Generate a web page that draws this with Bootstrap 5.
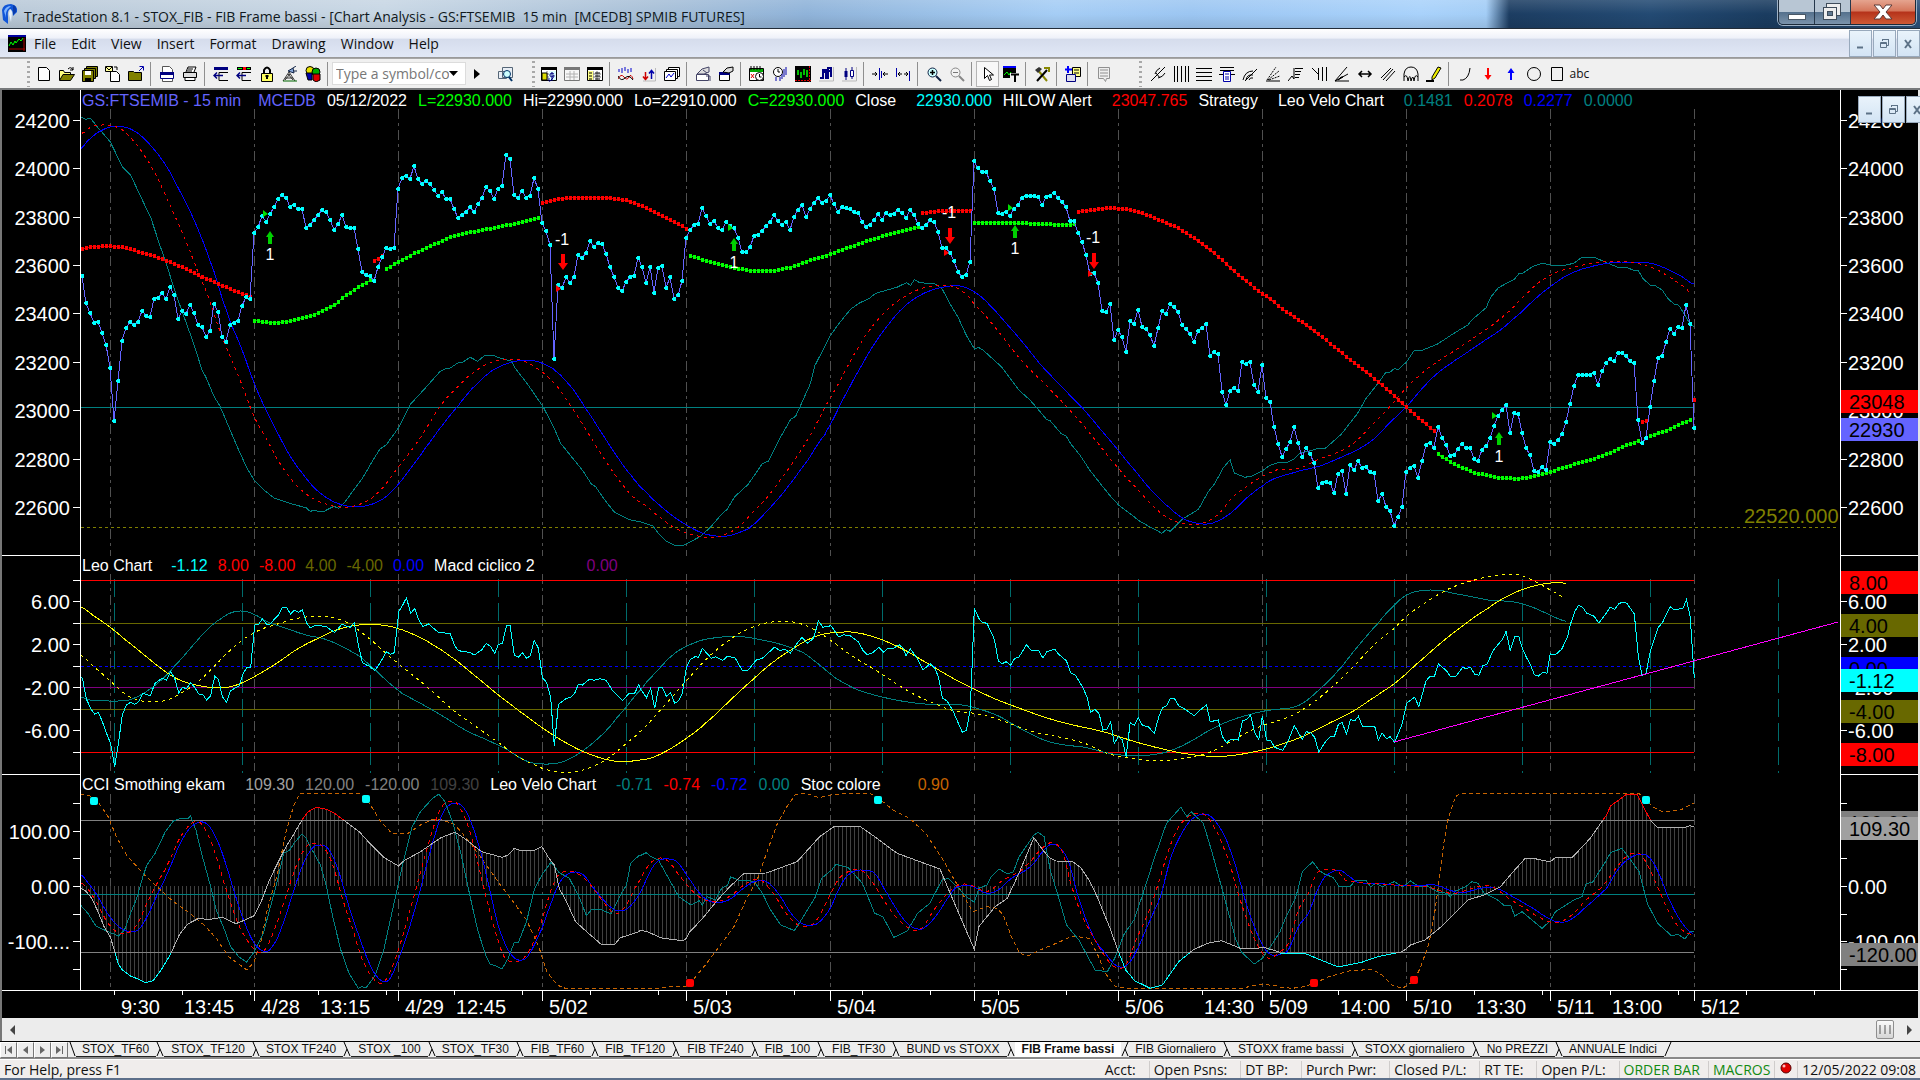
<!DOCTYPE html>
<html lang="en">
<head>
<meta charset="utf-8">
<meta name="viewport" content="width=device-width, initial-scale=1">
<title>TradeStation 8.1 - STOX_FIB</title>
<link href="https://cdn.jsdelivr.net/npm/bootstrap@5.3.0/dist/css/bootstrap.min.css" rel="stylesheet">
<style>
body{font-family:"Open Sans","Noto Sans",sans-serif;font-size:14px;line-height:18px;color:#111;background:#f0f0f0;overflow:hidden}
button{border:0;background:none;padding:0;color:inherit}
svg{display:block}
.titlebar{height:29px;border-bottom:1px solid #222c38;background:linear-gradient(180deg,#ffffff22,#ffffff00 50%,#00000018),linear-gradient(90deg,#b9c9d8 0,#c7d6e4 20%,#a7bfd7 34%,#8fb3d9 42%,#a5cdf5 55%,#9cc6f2 62%,#a9d2fb 74%,#a3cdf6 77.4%,#1c3d62 78.6%,#234a73 86%,#1a3c60 92%,#2c5078 100%)}
.title-text{color:#101820}
.menu-items{gap:15px}
.wbtns{height:25px;border:1px solid #1b2a3a;border-top:0;border-radius:0 0 5px 5px;overflow:hidden;box-shadow:0 0 0 1px #9fb2c6}
.wbtns button{width:36px;background:linear-gradient(#b8c6d4 0 48%,#54708c 50%,#7b93ab);border-right:1px solid #26384c}
.wbtns .wclose{width:64px;background:linear-gradient(#e5a48f 0,#d5765b 46%,#b5321a 50%,#cf5a35);border:0}
.menubar{height:29px;background:linear-gradient(#fff 0,#eef1f9 32%,#d5dcec 34%,#e1e8f6 96%,#9a9a9a 97%)}
.menubar a{color:#111;text-decoration:none}
.mdi button{width:23px;height:27px;border:1px solid #98a9bc;background:linear-gradient(#e9f3fb,#d3e4f4);margin-left:1px}
.toolrow{height:32px;background:#f0f0f0;border-top:1px solid #a7a7a7;border-bottom:2px solid #77797b}
.tb{width:23px;height:26px;display:flex;align-items:center;justify-content:center}
.tb.pressed{background:#f8f8f8;border:1px solid #b5b5b5}
.tb.off{filter:grayscale(1);opacity:.5}
.tb.word{font-size:12px}
.tsep{width:1px;height:24px;background:#8f8f8f;margin:0 4px 0 3px}
.tgrip{width:3px;height:26px;margin:0 2px;background:repeating-linear-gradient(#a8a8a8 0 2px,transparent 2px 5px)}
.tlead{width:25px}
.tgap{width:22px}
.combo{width:134px;height:23px;background:#fff;border:1px solid #dcdcdc}
.combo input{border:0;outline:0;background:none;width:116px;padding:0 0 0 3px;font-size:14px}
.combo input::placeholder{color:#777;opacity:1}
.chart{background:#000;border-left:2px solid #777;border-right:2px solid #e4e4e4;min-height:0}
.pane{min-height:0;position:relative}
.pane1{flex:466 1 0}.pane2{flex:218 1 0}.pane3{flex:216 1 0}
.axl{width:79px;height:100%}.axr{width:78px;height:100%}
.plotbox{min-width:0;height:100%}
.plotbox svg{width:100%;height:100%}
.legend-line{position:absolute;left:1px;top:1px;gap:11px;font:16px/20px "Liberation Sans",Arial,sans-serif;color:#fff;white-space:nowrap}
.pane2 .legend-line{top:0;gap:10px}
.g1{margin-left:6px}.g2{margin-left:9px}.g4{margin-left:42px}.g3{margin-left:26px}
.c-pr{color:#6464ff}.c-gr{color:#00ff00}.c-cy{color:#00ffff}.c-rd{color:#ff0000}.c-tl{color:#008080}.c-bl{color:#0000ff}.c-ol{color:#686800}.c-pu{color:#800080}.c-g1{color:#a0a0a0}.c-g2{color:#808080}.c-dk{color:#404040}.c-or{color:#c86400}.c-ok{color:#128a12}
.chart text{font:20px "Liberation Sans",Arial,sans-serif;fill:#fff}
.chart text.sig{font-size:16px;text-anchor:middle}
.chart text.level{fill:#808000}
.chart text.ink{fill:#000}
.timeaxis{height:28px}
.timeaxis svg{width:100%;height:100%}
.childbtns{position:absolute;right:-11px;top:6px}
.scrollrow{height:23px;background:#ececec;border-left:2px solid #777}
.thumb{width:18px;height:19px;border:1px solid #8e8e8e;border-radius:2px;background:linear-gradient(#fafafa,#d5d5d5)}
.sheets{height:18px;border-top:1px solid #000;border-bottom:2px solid #8a8a8a;background:#ededed;font:12px/15px "Liberation Sans",Arial,sans-serif}
.sheets .nv{width:17px;height:16px;border:1px solid #fff;border-right-color:#777;border-bottom-color:#777;display:flex;align-items:center;justify-content:center}
.slant{flex:none;width:8px}
.sheet{padding:0 7px;height:15px;border-bottom:1px solid #222;white-space:nowrap}
.sheet:nth-of-type(odd){padding-left:6px}
.sheet.on{background:#fff;font-weight:bold;border-bottom-color:#fff}
.status{height:21px;padding-top:1px;background:#f0edec;border-bottom:2px solid #5d6f8a;border-top:1px solid #fff}
.status .cell{border-left:1px solid #cfcccb;padding:0 13px 0 4px;white-space:nowrap}
</style>
</head>
<body class="vh-100 d-flex flex-column">
<header class="titlebar d-flex align-items-start flex-shrink-0">
  <svg width="20" height="28" viewBox="0 0 20 28" aria-hidden="true"><path d="M2 10Q3 4 11 4Q18 5 17 12L13 16Q13 10 10 9Q7 11 8 17L8 24L3 20Z" fill="#1156d8"/><path d="M4 11Q6 6 11 6L9 8Q5 11 6 18Z" fill="#7db4ff"/><path d="M9 14L10 9L12 12L11 22Z" fill="#e8f2ff"/><path d="M13 5Q17 6 16 12L13 15Z" fill="#0a3bab"/></svg>
  <div class="ps-1 pt-1 flex-fill text-truncate title-text"><span class="d-block pt-1">TradeStation 8.1 - STOX_FIB - FIB Frame bassi - [Chart Analysis - GS:FTSEMIB&nbsp; 15 min&nbsp; [MCEDB] SPMIB FUTURES]</span></div>
  <div class="wbtns d-flex me-1">
    <button aria-label="Minimize"><svg width="36" height="24"><rect x="9.500" y="14.500" width="17" height="5" fill="#fff" stroke="#4a5866"/></svg></button>
    <button aria-label="Restore"><svg width="36" height="24" fill="#eee" stroke="#3f4c5a"><rect x="11.500" y="3.500" width="14" height="12"/><rect x="8.500" y="7.500" width="13" height="12"/><rect x="12.500" y="11.500" width="5" height="4" fill="#5f7890"/></svg></button>
    <button class="wclose" aria-label="Close"><svg width="60" height="24"><path d="M23 5h6l3 4 3-4h6l-6 7 6 7h-6l-3-4-3 4h-6l6-7z" fill="#fff" stroke="#5b3a38"/></svg></button>
  </div>
</header>
<nav class="menubar d-flex align-items-center flex-shrink-0">
  <svg class="ms-2" width="18" height="17"><path d="M0 0h18v17h-18z"/><path d="M0 0h18v2h-18z" fill="#0000a0"/><path d="M1 11l2-4 2 3 2-4 1 2 3-4 2 2 2-3" stroke="#0f0" fill="none"/><path d="M1 14h16M16 3v13" stroke="#a00"/></svg>
  <div class="d-flex menu-items ps-2">
    <a href="#">File</a><a href="#">Edit</a><a href="#">View</a><a href="#">Insert</a><a href="#">Format</a><a href="#">Drawing</a><a href="#">Window</a><a href="#">Help</a>
  </div>
  <div class="mdi ms-auto d-flex" id="mdi"></div>
</nav>
<div class="toolrow d-flex align-items-center flex-shrink-0" id="tools"></div>
<main class="chart d-flex flex-column flex-fill">
  <section class="pane pane1 d-flex">
    <svg class="axl" id="l1" viewBox="2 90 79 466" preserveAspectRatio="none"></svg>
    <div class="plotbox flex-fill position-relative"><svg id="p1" viewBox="81 90 1759 466" preserveAspectRatio="none"></svg>
      <div class="legend-line d-flex"><span class="c-pr">GS:FTSEMIB - 15 min</span><span class="c-pr g1">MCEDB</span><span>05/12/2022</span><span class="c-gr">L=22930.000</span><span>Hi=22990.000</span><span>Lo=22910.000</span><span class="c-gr">C=22930.000</span><span>Close</span><span class="c-cy g2">22930.000</span><span>HILOW Alert</span><span class="c-rd g2">23047.765</span><span>Strategy</span><span class="g2">Leo Velo Chart</span><span class="c-tl g2">0.1481</span><span class="c-rd">0.2078</span><span class="c-bl">0.2277</span><span class="c-tl">0.0000</span></div></div>
    <svg class="axr" id="r1" viewBox="1840 90 78 466" preserveAspectRatio="none"></svg>
    <div class="mdi childbtns d-flex" id="mdi2"></div>
  </section>
  <section class="pane pane2 d-flex">
    <svg class="axl" id="l2" viewBox="2 556 79 218" preserveAspectRatio="none"></svg>
    <div class="plotbox flex-fill position-relative"><svg id="p2" viewBox="81 556 1759 218" preserveAspectRatio="none"></svg>
      <div class="legend-line d-flex"><span>Leo Chart</span><span class="c-cy g2">-1.12</span><span class="c-rd">8.00</span><span class="c-rd">-8.00</span><span class="c-ol">4.00</span><span class="c-ol">-4.00</span><span class="c-bl">0.00</span><span>Macd ciclico 2</span><span class="c-pu g4">0.00</span></div></div>
    <svg class="axr" id="r2" viewBox="1840 556 78 218" preserveAspectRatio="none"></svg>
  </section>
  <section class="pane pane3 d-flex">
    <svg class="axl" id="l3" viewBox="2 774 79 216" preserveAspectRatio="none"></svg>
    <div class="plotbox flex-fill position-relative"><svg id="p3" viewBox="81 774 1759 216" preserveAspectRatio="none"></svg>
      <div class="legend-line d-flex"><span>CCI Smothing ekam</span><span class="c-g1 g2">109.30</span><span class="c-g2">120.00</span><span class="c-g2">-120.00</span><span class="c-dk">109.30</span><span>Leo Velo Chart</span><span class="c-tl g2">-0.71</span><span class="c-rd">-0.74</span><span class="c-bl">-0.72</span><span class="c-tl">0.00</span><span>Stoc colore</span><span class="c-or g3">0.90</span></div></div>
    <svg class="axr" id="r3" viewBox="1840 774 78 216" preserveAspectRatio="none"></svg>
  </section>
  <section class="timeaxis flex-shrink-0"><svg id="tx" viewBox="2 990 1916 28" preserveAspectRatio="none"></svg></section>
</main>
<div class="scrollrow d-flex align-items-center flex-shrink-0">
  <button class="px-2" aria-label="Scroll left"><svg width="6" height="10"><path d="M5 0v10L0 5z" fill="#444"/></svg></button>
  <button class="thumb ms-auto" aria-label="Scroll thumb"><svg width="16" height="17"><path d="M3 4v9M8 4v9M13 4v9" stroke="#555"/></svg></button>
  <button class="ms-2 me-2 ps-1" aria-label="Scroll right"><svg width="6" height="10"><path d="M1 0v10L6 5z" fill="#444"/></svg></button>
</div>
<nav class="sheets d-flex flex-shrink-0" id="sheets"></nav>
<footer class="status d-flex flex-shrink-0">
  <span class="ps-1 me-auto">For Help, press F1</span>
  <span class="cell border-0">Acct:</span><span class="cell">Open Psns:</span><span class="cell">DT BP:</span><span class="cell">Purch Pwr:</span><span class="cell">Closed P/L:</span><span class="cell">RT TE:</span><span class="cell">Open P/L:</span>
  <span class="cell pe-2 c-ok">ORDER BAR</span><span class="cell pe-1 c-ok">MACROS</span>
  <span class="cell px-1"><svg width="14" height="16"><circle cx="7" cy="7" r="5" fill="#e00000" stroke="#500"/><circle cx="5" cy="5" r="1.500" fill="#fbb"/></svg></span><span class="cell pe-1">12/05/2022 09:08</span>
</footer>
<script src="https://cdn.jsdelivr.net/npm/bootstrap@5.3.0/dist/js/bootstrap.bundle.min.js"></script>
<script>
const $=id=>document.getElementById(id);
/* child window buttons */
const mdi=`<button aria-label="Minimize child"><svg width="21" height="25"><path d="M7 16.500h6" stroke="#5d7287" stroke-width="2"/></svg></button><button aria-label="Restore child"><svg width="21" height="25" fill="none" stroke="#5d7287"><path d="M8.500 10V8.500h6v6H13M8 8.500h7"/><path d="M6.500 11.500h6v5h-6zM6 12.500h7"/></svg></button><button aria-label="Close child"><svg width="21" height="25"><path d="M7 9l6 8M13 9l-6 8" stroke="#5d7287" stroke-width="2"/></svg></button>`;
$('mdi').innerHTML=mdi;$('mdi2').innerHTML=mdi;

/* toolbar icons on a 16px grid */
const doc='<path d="M2.500 1.500h8l3 3v10h-11z" fill="#fff" stroke="#000"/>';
const mag='<circle cx="6.500" cy="6.500" r="4.500" fill="#cff" stroke="#124"/><path d="M10 10l5 5" stroke="#124" stroke-width="2"/>';
const cal='<path d="M.500 1.500h15v13h-15z" fill="#fff" stroke="#000"/><path d="M0 1h16v3H0z"/><path d="M2 8h12M2 11h12M6 5v9M10 5v9" stroke="#777"/>';
const wins='<path d="M4.500 1.500h11v9h-11z" fill="#fff" stroke="#000"/><path d="M2.500 3.500h11v9h-11z" fill="#fff" stroke="#000"/><path d="M.500 5.500h11v9h-11z" fill="#fff" stroke="#000"/>';
const I={
'New':doc,
'Open':'<path d="M.500 14V4.500h4l1 2h6V8" fill="#ffff80" stroke="#000"/><path d="M.500 14.500L4 8.500h11.500l-4 6z" fill="#808000" stroke="#000"/><path d="M9 3q3-3 5 1M14 1v3h-3" fill="none" stroke="#000"/>',
'Save all':'<path d="M4.500.500h11v10h-11z" fill="#808000" stroke="#000"/><path d="M2.500 2.500h11v10h-11z" fill="#808000" stroke="#000"/><path d="M.500 4.500h11v11h-11z" fill="#808000" stroke="#000"/><path d="M3 5h6v4H3z" fill="#fff"/><path d="M3 12h6v3H3z"/>',
'Import':'<path d="M5.500 5.500h6l3 3v7h-9z" fill="#fff" stroke="#000"/><path d="M.500.500h7v5h-7z" fill="#ff9" stroke="#000"/><path d="M1 1l3 3 3-3M9 1h3v3" fill="none" stroke="#000"/>',
'Close workspace':'<path d="M.500 14.500V5.500h5l1 1h7v8z" fill="#808000" stroke="#000"/><path d="M11 5l4-4M11.500.500h4v4" fill="none" stroke="#00a"/>',
'Window':'<path d="M3.500.500h7l3 3v12h-10z" fill="#fff" stroke="#555"/><path d="M1.500 6.500h13v6h-13z" fill="#fff" stroke="#000080"/><path d="M1 6h14v3H1z" fill="#000080"/>',
'Print':'<path d="M4 6l2-5h8l-2 5" fill="#fff" stroke="#000"/><path d="M1.500 6.500h13v5h-13z" fill="#ddd" stroke="#000"/><path d="M3 11.500h10v3H3z" fill="#fff" stroke="#000"/><path d="M6 3h5M5 5h5" stroke="#000"/>',
'Insert bar':'<path d="M1 1h14v3H1z" fill="#000080"/><path d="M15 6.500H6v8h9" stroke="#000" fill="none"/><path d="M1 9.500h9M4 6.500l-3 3 3 3" fill="none" stroke="#000080" stroke-width="1.500"/>',
'Insert color bar':'<path d="M1 1h14v3H1z"/><path d="M2 2h4v1H2z" fill="#0f0"/><path d="M7 1h3v3H7z" fill="#f00"/><path d="M11 2h3v1h-3z" fill="#0f0"/><path d="M15 6.500H6v8h9" stroke="#000" fill="none"/><path d="M1 9.500h9M4 6.500l-3 3 3 3" fill="none" stroke="#000080" stroke-width="1.500"/>',
'Lock':'<path d="M5 7V4q3-5 6 0v3" fill="none" stroke="#000" stroke-width="2"/><path d="M2.500 7.500h11v8h-11z" fill="#ffff60" stroke="#000"/><path d="M8 9v4M6.500 10h3" stroke="#000" stroke-width="2"/>',
'Satellite':'<path d="M1 15L7 6l6 9M3 12h8M6 8l5 6M8 8l-5 6" fill="none" stroke="#333"/><path d="M6 5l5-3 1 5zM11 2l3-2M12 5l3 0" stroke="#124" fill="#8ad"/><path d="M1 15h14" stroke="#060"/>',
'Cubes':'<circle cx="5" cy="4.500" r="4" fill="#e8e000" stroke="#000"/><circle cx="11" cy="6" r="4" fill="#0a0" stroke="#000"/><path d="M1 7h6v7H3z" fill="#00a" stroke="#000"/><path d="M8 8h7v6l-4 2-3-2z" fill="#d00" stroke="#000"/>',
'Find':'<path d="M5.500 1.500h10v10h-10zM1.500 5.500h8v7h-8z" fill="#e8eef5" stroke="#567"/><circle cx="10" cy="8" r="3.500" fill="#cff" stroke="#036"/><path d="M12 11l3 4" stroke="#036" stroke-width="2"/>',
'Data':cal+'<path d="M1 7h5v7H1z" fill="#dd0" stroke="#000"/><path d="M8 5h7v9H8z" fill="#dff"/><path d="M13 8q-4-2-4 1t3 1-1 3-3-1M11 6v9" fill="none" stroke="#000080"/>',
'Grid':cal,'Table':cal+'<path d="M1 5h5v9H1z" fill="#ff8"/><path d="M2 7h3M2 10h3M2 13h3M8 7h5M8 10h5M8 13h5" stroke="#000"/>',
'Indicator':'<path d="M1 6V3M4 7V2M7 5V1M10 7V3M13 6V2" stroke="#00c"/><path d="M0 13q3-6 6-2t5 0 4 2" fill="none" stroke="#c00"/><path d="M0 10q3 6 7 2t8 2" fill="none" stroke="#000"/>',
'Signal':'<path d="M4.500 6v7M2 10.500l2.500 3 2.500-3" fill="none" stroke="#c00" stroke-width="1.500"/><path d="M10.500 13V5M8 7.500l2.500-3 2.500 3" fill="none" stroke="#00a" stroke-width="1.500"/><path d="M14.500 2v13H2" fill="none" stroke="#bbb"/>',
'Layers':wins+'<path d="M2 12l3-4 2 3 3-4" fill="none" stroke="#00c"/>',
'Format window':'<path d="M1.500 8.500h12v6h-12z" fill="#fff" stroke="#446"/><path d="M2 8l5-5 7-2v5l-5 2z" fill="#ddd" stroke="#446"/><path d="M8 4l4 3M11 10h4v5" stroke="#446" fill="none"/>',
'Format symbol':'<path d="M1.500 6.500h10v8h-10z" fill="#fff" stroke="#000"/><path d="M1 6h11v3H1z" fill="#000080"/><path d="M5 6l4-4 6-1v4l-4 2z" fill="#ddd" stroke="#000"/>',
'Schedule':'<path d="M.500 2.500h14v12h-14z" fill="#fff" stroke="#000"/><path d="M1 3h13v3H1z" fill="#0a0"/><path d="M2 0v4M5 0v4M8 0v4M11 0v4" stroke="#000"/><circle cx="10.500" cy="10.500" r="4" fill="#fff" stroke="#000"/><path d="M10.500 8v3h2" fill="none" stroke="#000"/><path d="M2 8l3 4M5 8l-3 4" stroke="#d00"/>',
'Interval':'<circle cx="6" cy="6" r="4.500" fill="#fff" stroke="#000"/><path d="M6 3v3h2" fill="none" stroke="#000"/><path d="M12 3v8M14 1v8M4 11v4M8 11v4M10 8v5" stroke="#00a"/>',
'Black chart':'<path d="M0 0h16v16H0z"/><path d="M3 4v5M6 6v6M9 3v6M12 4v7" stroke="#0f0" stroke-width="1.500"/><path d="M0 14.500h16M14.500 0v16" stroke="#d00" stroke-dasharray="2 1"/>',
'Bars':'<path d="M2 12h3V4h3v8h2V2h3v9M5 6h3M10 5h3" fill="none" stroke="#000080" stroke-width="2"/><path d="M15.500 1v14H1" fill="none" stroke="#bbb"/>',
'Candles':'<path d="M5 2v12M11 1v12" stroke="#000080"/><path d="M3.500 5h3v6h-3z" fill="#000080"/><path d="M9.500 4.500h3v6h-3z" fill="#fff" stroke="#000080"/><path d="M15.500 1v14H1" fill="none" stroke="#bbb"/>',
'Narrow':'<path d="M7.500 2v12M9.500 5v7" stroke="#00a"/><path d="M0 8h5M3 6l2 2-2 2M16 8h-5M13 6l-2 2 2 2" fill="none" stroke="#000"/>',
'Widen':'<path d="M1.500 2v9M14.500 5v10" stroke="#00a"/><path d="M3 8h4M5 6L3 8l2 2M13 8H9M11 6l2 2-2 2" fill="none" stroke="#000"/>',
'Zoom in':mag+'<path d="M4 6.500h5M6.500 4v5" stroke="#000" stroke-width="1.500"/>','Zoom out':mag+'<path d="M4 6.500h5" stroke="#000"/>',
'Pointer':'<path d="M4.500 1.500v11l3-3 2 5 2-1-2-4.500h4z" fill="#fff" stroke="#000"/>',
'Chart tip':'<path d="M0 1h13v11H0z"/><path d="M0 0h13v2H0z" fill="#00f"/><path d="M1 9l3-3 2 3 2-3" fill="none" stroke="#0f0"/><path d="M7 7h9v9H7z" fill="#f0f0f0"/><path d="M8 8.500h8M12 8v8" stroke="#000" stroke-width="2"/>',
'Tools':'<path d="M3 3l10 12" stroke="#880" stroke-width="2"/><path d="M13 4L3 15" stroke="#000" stroke-width="2"/><path d="M1 4l4-3 3 2-4 4z" fill="#333"/><path d="M10 2l5 0 0 4" fill="none" stroke="#880" stroke-width="2"/>',
'Add window':'<path d="M3 0v7M0 3.500h7" stroke="#00f" stroke-width="2"/><path d="M7.500 1.500h8v9h-8z" fill="#ff8" stroke="#000"/><path d="M9 4h5M9 7h5" stroke="#000"/><path d="M1.500 8.500h9v7h-9z" fill="#dde" stroke="#000080"/>',
'Comment':'<path d="M2.500 1.500h11v11h-3l-1 3-2-3h-5z" fill="#eee" stroke="#333"/><path d="M4 4h8M4 7h8M4 10h8" stroke="#333"/>',
'Fork':'<path d="M1 15L9 7M5 8q1-4 5-6M8 12q5-1 7-5M9 7l6-6M6 7l4 5" fill="none" stroke="#000"/>',
'Vertical lines':'<path d="M1.500 0v16M4.500 0v16M8.500 0v16M12.500 0v16M15.500 0v16" stroke="#000"/>',
'Horizontal lines':'<path d="M0 2.500h16M0 6.500h16M0 10.500h16M0 14.500h16" stroke="#000"/>',
'Price levels':'<path d="M1 1.500h14M1 4.500h14M0 8.500h16" stroke="#000"/><path d="M4.500 5.500h7v10h-7z" fill="#fff" stroke="#00a"/><path d="M6 8h4M6 11h4M6 13h4" stroke="#00a"/>',
'Arcs':'<path d="M1 14Q3 5 11 5M4 14q1-6 7-5M7 14q1-3 4-2M3 15L15 3" fill="none" stroke="#000"/>',
'Fan':'<path d="M1 15h14" stroke="#000"/><path d="M2 14L11 1M3 14L14 5M4 14l11-4" stroke="#000" stroke-dasharray="2 1"/>',
'Retrace':'<path d="M0 15l4-5 2 3V2M7 2.500h8M7 5.500h6M7 8.500h5M7 11.500h4" fill="none" stroke="#000"/>',
'Time levels':'<path d="M1 2l6 6M7.500 2v12M11.500 1v14M15.500 1v14" stroke="#000"/>',
'Speed lines':'<path d="M1 15h14M1 15L13 1M1 15l13-7" fill="none" stroke="#000"/><path d="M4 14l5-3h-2z" stroke="#000"/>',
'Extend':'<path d="M2 8h12M5 5L2 8l3 3M11 5l3 3-3 3" fill="none" stroke="#000" stroke-width="1.500"/>',
'Channel':'<path d="M1 12L11 2M3 14L13 3M6 15l9-10" stroke="#000"/>',
'Cycles':'<path d="M1 15V8q1-7 7-7t7 7v7M1 11q3-4 4 4 2-9 3 0 2-8 3 0 1-8 4-4" fill="none" stroke="#000"/>',
'Pencil':'<path d="M6 11L12 1l3 1-6 10-3 2z" fill="#ee0" stroke="#000"/><path d="M0 15h8" stroke="#000" stroke-width="2"/>',
'Arc':'<path d="M3 14h3q6-2 7-12" fill="none" stroke="#000"/>',
'Down arrow':'<path d="M7 2h2v7h2.500L8 14 4.500 9H7z" fill="#f00"/>','Up arrow':'<path d="M7 14h2V7h2.500L8 2 4.500 7H7z" fill="#00f"/>',
'Ellipse':'<circle cx="8" cy="8" r="6.500" fill="none" stroke="#000"/>','Rectangle':'<path d="M2.500 1.500h11v13h-11z" fill="none" stroke="#000"/>'};
const order=['<span class="tlead"></span><i class="tgrip"></i>','New','Open','Save all','Import','Close workspace','|','Window','Print','|','Insert bar','Insert color bar','Lock','Satellite','Cubes','|',
'<div class="combo d-flex align-items-center"><input type="text" aria-label="Symbol" placeholder="Type a symbol/co"><button aria-label="Symbol list"><svg width="10" height="6"><path d="M0 0h9L4.500 5z"/></svg></button></div><button class="px-1 ms-1 me-2" aria-label="Go"><svg width="7" height="10"><path d="M0 0v10l6-5z"/></svg></button>','Find','<i class="tgrip ms-3"></i>',
'Data','!Grid','Table','|','Indicator','Signal','Layers','|','Format window','Format symbol','|','Schedule','Interval','Black chart','Bars','Candles','|','Narrow','Widen','|','Zoom in','!Zoom out','|','*Pointer','Chart tip','|','Tools','|','Add window','|','!Comment',
'<span class="tgap"></span><i class="tgrip me-1"></i>','Fork','Vertical lines','Horizontal lines','Price levels','Arcs','Fan','Retrace','Time levels','Speed lines','Extend','Channel','Cycles','Pencil','|','Arc','Down arrow','Up arrow','Ellipse','Rectangle','<button class="tb word">abc</button>'];
$('tools').innerHTML=order.map(n=>{
 if(n[0]==='<')return n;if(n==='|')return '<i class="tsep"></i>';
 const c=n[0]==='!'?' off':n[0]==='*'?' pressed':'';n=n.replace(/^[!*]/,'');
 return `<button class="tb${c}" aria-label="${n}"><svg width="16" height="16">${I[n]}</svg></button>`}).join('');

/* workbook tabs */
const names=['STOX_TF60','STOX_TF120','STOX TF240','STOX _100','STOX_TF30','FIB_TF60','FIB_TF120','FIB TF240','FIB_100','FIB_TF30','BUND vs STOXX','FIB Frame bassi','FIB Giornaliero','STOXX frame bassi','STOXX giornaliero','No PREZZI','ANNUALE Indici'];
const slant=d=>`<svg class="slant" height="15"><path d="${d}" fill="none" stroke="#000"/></svg>`;
$('sheets').innerHTML=['M8 1v8L3 5zM1 1h1v8H1z','M7 1v8L2 5z','M2 1v8l5-4z','M1 1v8l5-4zM7 1h1v8H7z'].map((d,i)=>`<button class="nv" aria-label="Tab scroll ${i+1}"><svg width="9" height="10"><path d="${d}" fill="#666"/></svg></button>`).join('')+
 slant('M2 0L7 14')+names.map((t,i)=>`<button class="sheet${i===11?' on':''}">${t}</button>`+slant(i===16?'M7 0L1 14':i===11?'M7 0L1 14M4 7L7 14':'M1 0L7 14M4 7L1 14')).join('');

/* curve tiles: origin x, origin y, horizontal units per pixel; three vertical units per pixel */
const T={a:[0,0,2.45],b:[500,0,2.45],c:[1100,0,1.912],d:[0,300,2.3758],e:[640,240,2.3758],f:[1280,240,2.45],g:[0,550,2.45],h:[640,550,2.45],i:[1280,550,2.45],j:[0,770,2.45],k:[640,770,2.45],l:[1280,770,2.45]};
const pts=s=>s.split(';').flatMap(q=>{q=q.trim();const [x0,y0,k]=T[q[0]];return q.slice(1).trim().split(/\s+/).map(p=>{const [x,y]=p.split(',').map(Number);return [x0+x/k,y0+y/3]})}).sort((m,n)=>m[0]-n[0]);
const r=n=>Math.round(n*10)/10;
const line=(p,c,x='')=>`<polyline points="${p.map(q=>r(q[0])+','+r(q[1])).join(' ')}" fill="none" stroke="${c}" ${x}/>`;
const smooth=p=>{const o=[];for(let i=0;i<p.length-1;i++){const a=p[i-1]||p[i],b=p[i],c=p[i+1],d=p[i+2]||c;for(let j=0;j<4;j++){const t=j/4,f=k=>.5*(2*b[k]+(c[k]-a[k])*t+(2*a[k]-5*b[k]+4*c[k]-d[k])*t*t+(3*b[k]-a[k]-3*c[k]+d[k])*t*t*t);o.push([b[0]+(c[0]-b[0])*t,f(1)])}}o.push(p[p.length-1]);return o};
const at=(p,x)=>{for(let i=1;i<p.length;i++)if(p[i][0]>=x){const a=p[i-1],b=p[i];return b[0]===a[0]?b[1]:a[1]+(b[1]-a[1])*(x-a[0])/(b[0]-a[0])}return p[p.length-1][1]};
const H=(y,c,x2=1694,x='')=>`<path d="M81 ${y}H${x2}" stroke="${c}" ${x}/>`;
const days=(y1,y2)=>[...Array(12)].map((_,i)=>`<path d="M${110.5+144*i} ${y1}V${y2}" stroke="#505050" stroke-dasharray="10 4 3 4"/>`).join('');
const D='stroke-dasharray="3 4"';

/* price, one close per 4px bar */
const price=[[82,0,[829]],[86,300,[10,39,68,66,98,134,203,362,242,122,83,66,74,66,32,47,50]],[154,0,[897,893,879,897,860,885]],[178,300,[56,33,41,14,38,74,81,110,92,11,35,110,125,74,68,62,17]],
[246,0,[892,897,699,682,648,665,642,621,597,584,593,621,614,626,627,684,674,661,645,630,635,659,689,672,645,681,684,684,748,816,826,829,843,801,772,744,747,745,566,534,527,536,499,537,552,542,551,569,587,576,597,597,627,654,645,635,621,635,611,593,560,574,597,566,557,464,477,586,593,572,593,588,534,567,670,693,735,1076,855,863,832,850,831,765,773,759,723,741,730,731,762,801,831,863,874,846,832,828,773,801,850,800,878,804,798,863,832,896,886,843,713,690,675,673,624,648,672,663,684,690,665,679,684,713,757,757,742,707,705,693,678,666,645,663,674,665,689,650,629,616,650,626,608,595,609,603,586,611,635,621,623,626,635,638,665,680,674,659,642,659,638,645,641,629,638,653,629,645,672,684,675,660,665,695,743,743,759,783,816,831,825,786,483,505,515,516,543,567,638,642,635,647,627,614,593,587,587,587,591,614,591,587,578,593,605,621,663,664,698,726,765,823,819,849]],
[1102,240,[213,215,191,299,269,291,336,243,252,209,260,267,285,318,264,213,221,191,201,215,255,267,282,306,272,264,252,348,336,342,455,495,452,444,454,366,371,366,435,455,375,474,486,561,611,650,627,606,561,608,651,623,642,668,743,728,726,728,759,701,692,761,675,690,663,684,681,695,699,783,762,800,812,857,830,800,695,684,678,713,662,615,608,623,560,593,614,648,645,626,611,623,624,656,663,629,617,593,557,528,510,495,578,518,521,578,624,645,692,695,681,690,605,611,600,581,545,491,437,405,405,405,405,399,435,392,369,357,363,338,339,348,363,369,539,608,594,501,423,353,348,306,266,281,261,264,194,252,564]]].flatMap(([x,o,v])=>v.map((y,i)=>[x+4*i,o+y/3]));

const vT=pts('a 197,350 210,358 222,355 240,383 270,425 300,500 320,525 345,590 370,655 390,730 410,800 425,860 436,900;d 440,60 460,130 480,210 490,233 508,288 522,317 535,355 550,400 567,450 585,500 604,541 630,573 652,595 700,614 727,623 737,634 747,631 757,634 770,634 793,619 805,625 822,602 840,570 862,533 885,483 902,448 918,434 947,383 975,313 1010,265 1045,215 1060,205 1070,204 1090,187 1100,186 1117,172 1135,184 1152,166 1175,168 1190,175 1205,180 1213,180 1225,206 1255,255 1290,320 1313,375 1332,430 1385,513 1405,552 1415,560 1435,597 1460,637 1495,659 1520,665;e 0,845 30,857 45,882 62,903 82,916 104,916 125,902 145,888 170,858 190,828 207,808 225,770 257,733 290,672 305,663 330,600 358,538 370,529 382,495 405,430 415,378 452,287 470,255 500,208 520,190 545,175 560,160 585,151 610,142 633,128 643,136 652,119 665,128 700,131 718,147 735,188 755,230 775,285 795,328 804,322 815,330 860,382 900,450 925,478 945,507 965,537 975,543 1000,580 1012,588 1025,614 1045,645 1070,693 1095,733 1120,772 1137,795 1190,846 1240,880 1250,869 1260,874 1290,836 1327,808 1350,755 1365,732 1385,685 1402,659 1412,699 1437,712 1455,708 1478,693 1495,677 1515,668;f 0,667 15,668 35,657 50,638 70,634 95,624 112,624 150,583 190,520 210,477 240,430 260,396 270,396 280,386 290,388 310,366 328,333 350,330 385,313 430,277 460,255 470,240 505,203 516,172 535,143 575,117 585,101 595,99 620,79 642,70 665,75 700,75 720,70 738,53 770,52 800,68 830,83 850,83 870,92 878,92 890,117 908,136 918,136 937,151 950,175 965,192 977,196 990,222 1003,248 1013,260');
const vR=smooth(pts('a 201,400 225,380 250,375 275,377 300,390 325,420 350,460 380,520 410,598 440,678 465,752 490,830 510,890;d 520,85 545,165 575,255 604,350 630,410 660,480 690,535 720,575 750,600 785,616 820,622 850,615 880,597 915,555 947,500 980,447 1010,390 1050,312 1080,270 1110,232 1150,197 1180,182 1215,178 1245,184 1285,213 1320,254 1360,325 1400,405 1440,485 1480,555 1510,597;e 5,790 40,825 80,862 110,878 140,889 175,892 205,882 235,860 265,820 300,775 330,725 370,655 410,575 440,500 470,435 500,362 535,288 575,225 610,185 650,155 690,139 735,137 765,153 795,194 850,272 905,360 960,430 1015,502 1070,582 1137,685 1180,745 1225,805 1260,838 1300,853 1335,850 1370,827 1410,770 1440,740 1475,712 1510,692;f 0,688 45,686 90,660 150,633 190,600 230,550 262,510 290,470 320,430 360,387 400,353 450,313 510,265 560,215 610,155 640,122 680,95 720,82 770,68 830,65 875,70 920,87 960,115 990,140 1010,162'));
const vB=smooth(pts('a 197,447 215,422 240,397 270,381 290,379 320,387 350,412 380,452 410,503 440,572 470,645 500,732 525,817 545,897;d 550,75 575,150 604,250 630,325 660,400 690,470 720,523 750,568 785,600 820,617 855,620 885,612 915,592 947,552 980,498 1010,445 1050,377 1090,315 1120,268 1160,221 1190,198 1220,185 1255,180 1280,186 1300,197 1320,213 1360,265 1390,323 1430,400 1470,476 1500,527;e 0,740 35,783 75,825 110,855 150,880 190,889 215,886 245,873 265,858 310,802 350,742 400,658 440,583 452,552 480,483 510,412 550,325 590,254 625,203 660,170 690,152 725,140 760,138 795,156 830,194 870,250 910,308 950,372 1000,438 1050,502 1090,562 1137,632 1180,698 1220,758 1260,805 1290,835 1320,849 1355,851 1385,835 1410,812 1440,775 1480,737 1505,717;f 10,706 50,692 100,677 150,652 190,629 230,597 270,547 310,500 350,443 390,395 430,360 490,311 540,270 590,218 630,172 662,140 700,108 740,87 800,70 850,66 910,70 950,88 985,110 1013,132'));
const trail=(s,c)=>{const p=pts(s);let o='';for(let x=82+4*Math.ceil((p[0][0]-1.5-82)/4);x<=p[p.length-1][0]+1.5;x+=4)o+=`<path d="M${x-1} ${Math.round(at(p,x))-2}h3v4h-3z" fill="${c}"/>`;return line(p,c,'stroke-opacity=".8"')+o};
const trails=[['a 201,747 225,741 260,738 295,741 330,752 380,770 430,793 480,822 530,850 580,876 613,891','#f00'],['a 917,783 937,768','#f00'],['d 604,62 640,68 660,69 700,60 740,47 770,30 800,12;a 835,897 870,867 908,840','#0f0'],['a 946,806 976,786 1015,760 1060,735 1100,713 1150,697 1200,686 1260,671 1321,653','#0f0'],['b 103,609 140,598 180,593 260,593 310,601 350,619 400,650 430,669 458,687','#f00'],['b 466,767 500,781 540,794 575,804 610,812 670,812 710,803 760,780 809,763 850,744 900,723 950,704 1000,688 1030,681','#0f0'],['b 1034,640 1070,634 1152,632','#f00'],['b 1162,668 1250,668 1300,671 1380,675 1409,673','#0f0'],['b 1417,635 1460,629 1470,627;c 5,626 25,624 60,630 95,648 125,668 150,685 180,715 210,750 240,790 270,832 300,870 325,897;e 1370,46 1420,104 1478,161;f 5,207 60,252 115,303 170,358 220,405 250,436 280,468 310,503 350,545 378,573','#f00'],['f 388,644 430,675 475,698 530,713 580,716 610,712 662,696 700,680 760,660 810,637 850,615 878,603','#0f0'],['f 907,588 940,575 1005,539','#0f0'],['f 887,545 897,543','#f00'],['f 1013,480 1015,480','#f00']];
const buy=(x,y,ty,tx,t)=>`<path d="M${x} ${y}l4 6h-2v7h-4v-7h-2z" fill="#00d000"/><text class="sig" x="${x}" y="${ty+6}">1</text><path d="M${tx-3} ${t-3}v7l5-3z" fill="#00e000"/>`;
const sell=(x,y,ty,tx,t)=>`<path d="M${x} ${y+16}l5-7h-3v-9h-4v9h-3z" fill="#f00"/><text class="sig" x="${x-1}" y="${ty+6}">-1</text><path d="M${tx-2} ${t-3}v7l5-3z" fill="#f00"/>`;
$('p1').innerHTML='<g shape-rendering="crispEdges">'+days(109,556)+H(407.5,'#008080')+H(527.5,'#808000',1838,'stroke-dasharray="3 3"')+line(vT,'#008080')+line(vB,'#0000ff')+line(vR,'#ff0000',D)+trails.map(t=>trail(...t)).join('')+line(price,'#6464ff')+price.map(([x,y])=>`<path d="M${x-1} ${Math.round(y)-2}h3v4h-3zM${x-2} ${Math.round(y)-1}h1v2h-1z" fill="#0ff"/>`).join('')+'</g>'+
buy(270,231,254,266,213)+buy(734,238,262,731,227)+buy(1015,225,248,1011,207)+buy(1499,432,456,1495,415)+sell(563,254,239,558,288)+sell(950,228,212,946,252)+sell(1094,253,237,1090,273)+'<text class="level" x="1744" y="523">22520.000</text>';

const osc=pts('g 197,379 202,385 212,448 222,475 232,493 241,487 251,515 261,550 271,580 281,650 290,580 300,493 310,465 320,457 330,463 340,455 350,430 368,437 380,400 397,385 408,390 418,365 428,385 438,430 447,412 457,416 467,398 477,412 487,432 497,434 506,450 516,438 526,379 535,388 545,440 555,457 565,422 575,415 585,409 595,372 605,352 614,354 624,225 634,222 643,207 653,222 662,222 672,208 682,195 692,172 702,172 712,193 721,180 731,187 741,180 751,218 760,233 775,225 800,230 820,248 838,222 848,228 858,232 868,218 878,285 888,338 898,345 907,350 918,362 928,345 947,305 956,313 966,308 977,185 987,164 996,143 1006,190 1016,176 1026,210 1036,230 1050,222 1075,248 1103,250 1113,285 1123,302 1150,307 1162,315 1180,300 1191,281 1201,288 1212,310 1221,283 1231,280 1241,227 1250,227 1260,315 1270,322 1280,308 1290,325 1299,318 1309,271 1319,295 1329,383 1339,397 1349,440 1358,588 1368,463 1388,445 1398,443 1408,430 1417,402 1427,405 1445,387 1455,391 1470,386 1485,391 1500,420 1525,452 1540,432 1555,430 1565,403;h 0,415 16,443 26,415 36,475 46,412 55,412 65,440 75,428 85,460 95,452 104,430 114,350 124,328 135,320 143,322 153,295 175,325 185,320 203,331 213,320 232,322 250,360 265,360 285,330 300,325 330,291 343,302 355,298 369,309 380,288 397,262 410,280 425,265 437,213 448,232 468,227 477,243 487,261 498,254 515,257 535,276 547,303 557,314 570,308 585,292 597,307 607,295 622,294 635,284 644,294 652,317 662,296 680,327 693,360 711,341 722,355 731,380 741,445 752,452 765,478 790,547 800,540 809,480 814,340 819,175 830,205 838,217 850,220 860,245 868,268 878,333 887,341 897,335 908,346 918,325 928,322 947,284 957,300 977,302 987,324 997,305 1016,297 1025,312 1045,333 1055,368 1067,376 1085,413 1095,440 1104,487 1115,478 1125,492 1134,540 1144,538 1153,515 1162,580 1172,560 1182,570 1191,620 1201,518 1211,526 1221,503 1231,526 1245,530 1260,550 1271,500 1280,473 1290,467 1300,445 1310,447 1320,467 1335,478 1358,497 1370,482 1388,465 1397,515 1417,510 1427,560 1437,578 1448,567 1466,570 1476,513 1487,507 1496,495 1506,548 1516,568 1525,498 1535,570 1545,572 1555,592;i 0,598 7,601 20,572 35,527 45,548 55,568 64,545 75,548 85,562 95,607 113,572 125,558 133,560 143,523 152,517 163,552 173,508 183,513 192,499 202,528 215,530 232,529 241,571 250,548 261,566 270,560 281,577 300,520 310,460 330,441 340,470 358,392 368,379 378,380 388,342 408,362 418,380 430,380 447,353 457,355 467,352 477,373 487,376 497,347 507,343 523,300 545,268 554,244 564,302 575,260 585,260 595,300 605,325 614,345 623,374 633,378 644,367 654,370 662,311 674,315 690,298 704,263 711,225 722,185 732,165 742,173 752,190 770,199 781,219 800,188 809,172 820,178 830,161 840,156 850,160 868,192 878,320 887,376 897,370 907,305 927,232 937,218 956,170 966,180 987,175 996,149 1005,200 1015,384');
const y1=smooth(pts('g 197,170 230,198 270,232 310,272 350,312 400,360 440,390 480,405 525,413 560,411 590,400 630,375 680,338 730,296 780,265 820,242 860,228 907,223 940,226 976,236 1020,257 1060,284 1110,325 1160,374 1221,435 1280,490 1340,543 1400,587 1450,615 1500,632 1535,635;h 0,630 15,628 60,606 114,565 160,520 220,452 280,385 330,333 370,300 410,270 450,252 500,246 535,249 590,268 640,295 690,330 760,380 819,417 870,447 930,475 1000,505 1060,525 1140,547 1221,578 1300,602 1360,615 1410,619 1460,615 1525,600;i 0,584 60,557 120,520 180,483 240,435 281,400 330,347 390,283 450,225 510,175 550,143 595,118 640,103 680,98 702,100'));
const y2=smooth(pts('g 197,315 230,350 270,393 310,435 345,452 375,455 410,450 445,428 480,400 520,355 560,305 600,265 640,238 680,222 720,207 760,200 800,200 830,208 860,225 907,268 950,315 1000,365 1050,415 1110,480 1160,525 1221,577 1270,620 1310,645 1345,661 1385,667 1420,663 1460,645 1495,620 1535,580;h 0,545 50,480 100,410 160,330 220,270 260,240 300,222 330,215 380,217 420,235 466,270 520,318 570,355 620,395 670,432 720,460 770,483 819,490 870,505 920,527 970,548 1030,562 1090,580 1140,608 1180,621 1240,631 1300,631 1350,621 1400,605 1450,573 1500,540 1530,525;i 0,510 40,490 90,450 130,408 180,350 230,285 280,235 320,188 370,147 420,113 470,92 530,76 570,73 595,78 640,104 670,125 700,145'));
const t2=smooth(pts('g 197,442 225,451 310,452 340,438 370,415 400,385 430,345 470,290 510,237 540,207 565,189 590,183 620,192 660,218 700,235 750,255 790,265 830,285 880,318 918,358 950,395 985,430 1030,460 1080,495 1140,540 1190,568 1240,597 1280,627 1310,640 1355,641 1390,630 1430,600 1470,560 1510,505;h 5,415 40,365 80,315 114,289 150,271 200,261 250,260 300,270 350,285 400,308 440,345 480,385 530,418 590,440 650,455 710,463 790,465 830,477 880,499 930,535 990,570 1040,585 1090,592 1150,610 1190,616 1240,616 1290,606 1340,580 1400,538 1450,510 1500,492 1530,483;i 0,477 20,475 55,460 100,415 140,365 190,290 240,220 281,165 310,135 345,122 390,121 430,131 470,140 510,150 560,154 595,162 640,183 700,214'));
$('p2').innerHTML='<g shape-rendering="crispEdges">'+days(574,771)+[...Array(14)].map((_,i)=>`<path d="M${114.5+128*i} 579V773" stroke="#006c6c" stroke-dasharray="18 6"/>`).join('')+H(580.5,'#f00')+H(623.5,'#686800')+H(666.5,'#00f',1694,'stroke-dasharray="3 3"')+H(687.5,'#800080')+H(709.5,'#686800')+H(752.5,'#f00')+line(t2,'#008080')+line(y1,'#ffff00')+line(y2,'#ffff00',D)+line(osc,'#00ffff')+'<path d="M1394 742L1838 622" stroke="#f0f"/></g>';

const cci=pts('j 197,355 210,363 225,385 240,425 255,470 270,500 280,540 290,583 300,600 320,618 340,628 355,638 375,632 395,600 417,555 440,493 460,462 485,446 515,448 545,442 578,461 600,450 623,437 640,395 660,330 680,280 700,232 720,192 740,150 755,125 775,112 800,118 820,130 845,153 880,185 910,225 940,262 976,288 990,272 1030,245 1080,203 1115,187 1140,207 1180,245 1230,262 1245,255 1260,235 1280,243 1310,240 1328,230 1345,265 1358,285 1370,355 1390,400 1410,455 1440,488 1475,525 1505,524 1520,503 1565,485;k 0,480 20,486 50,503 75,508 105,512 114,505 122,485 150,450 190,390 220,350 255,310 310,309 385,275 440,200 475,170 540,170 575,200 630,250 690,277 735,297 760,370 790,455 819,538 830,470 870,410 900,385 930,305 965,203 990,245 1005,265 1020,273 1060,275 1080,293 1100,330 1120,380 1150,470 1172,545 1190,600 1212,632 1250,655 1280,645 1320,575 1355,540 1390,520 1425,512 1475,537 1530,533 1565,545;l 0,550 60,550 100,570 143,591 200,577 240,560 300,545 320,525 355,510 400,465 460,390 500,375 540,350 575,300 600,266 625,266 662,276 675,262 715,264 760,205 800,135 810,108 850,72 875,73 890,110 910,155 925,173 990,173 1005,167 1013,170');
const b3=smooth(pts('j 197,313 220,345 240,380 262,428 290,470 320,485 340,478 360,440 385,375 410,310 440,225 465,175 490,156 510,165 530,205 550,270 575,370 600,460 623,520 650,545 670,525 690,472 715,380 740,290 765,235 785,226 805,238 830,305 855,410 880,500 905,580 925,622 945,635 960,615 985,540 1005,465 1025,380 1045,285 1070,178 1090,118 1115,99 1135,112 1155,160 1180,255 1200,360 1220,465 1245,540 1270,570 1295,555 1328,475 1350,400 1370,340 1390,313 1410,306 1430,315 1450,348 1475,385 1500,415 1520,423 1540,413;k 0,370 25,305 45,272 70,267 90,275 114,315 145,368 170,393 195,397 220,388 250,358 280,335 310,335 340,372 370,430 395,460 420,466 440,455 466,415 490,350 510,315 530,302 550,301 575,310 600,360 630,420 655,460 680,477 700,470 730,430 760,375 775,352 810,347 850,370 880,358 910,325 940,305 965,280 990,240 1010,222 1030,235 1050,275 1070,365 1090,440 1115,510 1140,550 1165,585 1190,588 1215,545 1250,450 1275,380 1300,265 1325,195 1350,150 1380,132 1405,147 1435,205 1460,290 1480,380 1505,470 1530,535 1550,556;l 0,553 20,540 45,470 70,430 90,365 110,320 143,300 165,315 190,337 240,340 310,348 380,345 420,362 450,368 490,355 530,355 570,380 620,415 662,447 685,456 710,450 750,410 800,355 830,295 860,262 890,252 910,270 930,315 950,380 975,440 1000,480 1013,490'));
const r3=smooth(pts('j 200,340 220,365 240,405 262,455 285,485 310,490 335,465 360,400 385,340 410,285 440,205 470,160 490,158 510,195 530,260 550,345 580,450 605,510 630,545 650,538 675,470 700,380 725,290 750,230 775,220 795,235 815,285 840,390 865,480 885,560 905,610 930,640 950,620 976,540 1000,440 1025,330 1055,200 1080,115 1105,93 1125,110 1150,180 1175,300 1195,400 1215,490 1235,560 1260,576 1290,555 1320,480 1345,380 1365,320 1385,304 1410,308 1440,335 1475,390 1500,425 1525,420;k 0,330 25,280 50,264 70,275 95,315 130,365 160,390 190,395 225,375 260,340 295,330 330,375 355,425 380,458 400,470 430,455 460,390 485,330 510,305 540,300 565,330 600,395 630,445 665,478 690,475 720,420 750,375 780,345 810,345 850,365 890,330 930,305 960,270 985,235 1010,218 1035,245 1055,340 1080,430 1110,500 1140,560 1165,592 1190,585 1215,510 1245,430 1270,340 1295,240 1320,170 1350,135 1385,135 1415,190 1445,280 1465,370 1490,460 1515,530 1540,565;l 0,545 20,520 45,420 70,370 90,310 115,298 140,303 160,330 190,337 310,347 360,350 400,365 430,370 480,352 520,350 560,385 600,415 640,445 675,458 710,440 750,390 790,350 820,300 850,258 880,250 900,285 925,350 950,420 980,475 1013,495'));
const t3=pts('j 197,405 215,430 235,468 265,485 290,498 305,480 320,430 335,385 350,320 360,285 380,250 405,185 425,152 445,145 460,147 467,138 480,180 495,255 515,345 530,420 550,480 565,530 585,560 604,577 623,545 645,490 665,400 680,330 695,250 710,240 720,220 740,192 750,205 765,240 785,285 800,350 815,440 835,540 855,610 878,655 885,650 897,653 920,615 940,540 960,430 976,340 990,265 1010,170 1030,125 1060,85 1075,72 1090,95 1110,160 1130,255 1150,370 1170,480 1190,555 1200,582 1215,588 1230,597 1245,565 1260,517 1270,517 1290,455 1310,355 1330,310 1350,277 1370,308 1395,325 1420,385 1437,437 1450,418 1475,420 1497,432 1520,375 1535,345 1545,280 1565,257;k 0,257 15,248 25,258 45,270 70,325 95,380 125,405 145,392 153,405 165,380 185,390 200,355 215,345 222,320 245,333 260,330 280,335 300,370 320,420 345,465 365,475 378,482 400,440 430,380 445,325 470,300 480,283 510,293 545,340 575,430 595,440 622,502 655,483 680,430 710,400 740,330 755,325 780,355 800,380 819,397 830,355 850,345 860,320 880,297 900,312 915,305 928,262 965,195 975,187 990,200 1005,300 1025,380 1045,465 1075,510 1115,600 1145,605 1165,560 1185,495 1210,450 1230,380 1260,265 1290,160 1325,112 1340,140 1350,125 1380,160 1400,240 1430,375 1460,510 1475,548 1505,582 1525,565 1550,520;l 0,485 15,440 38,385 55,305 80,275 95,300 110,313 130,322 145,350 172,350 185,330 210,330 222,350 235,340 250,350 280,335 300,350 320,333 340,350 360,347 385,365 410,370 417,382 430,363 455,350 470,335 485,340 500,370 530,387 550,407 565,405 575,438 593,425 642,475 660,455 675,425 720,390 740,380 750,340 765,338 795,280 810,248 838,235 850,255 880,305 900,400 925,460 960,498 975,493 992,507 1005,485 1013,485');
const o3=pts('j 197,73 220,77 240,95 265,140 285,200 310,255 350,310 380,345 420,390 460,425 500,465 530,505 560,560 605,600 623,575 640,510 655,420 680,310 700,190 720,105 735,71 880,70 905,100 930,150 960,190 1000,190 1030,165 1060,148 1085,150 1115,165 1150,215 1180,265 1220,335 1260,400 1290,450 1320,530 1340,605 1365,645 1385,655 1565,655;k 0,655 50,655 70,650 114,648 123,640 160,585 200,520 230,470 260,390 290,320 310,250 335,165 360,110 380,75 405,70 440,83 470,74 500,71 565,71 590,90 620,120 660,145 700,190 740,265 780,350 815,425 850,410 875,415 890,435 910,500 930,550 950,558 980,540 1020,520 1060,498 1100,505 1120,550 1140,610 1165,650 1190,655 1475,655 1520,642 1560,648;l 0,652 30,655 60,650 84,640 120,620 170,603 225,598 250,615 275,645 300,655 320,640 330,628 345,590 365,520 380,420 390,330 400,230 410,155 430,80 440,71 880,71 897,90 915,112 940,127 985,118 1013,100');
let hist='';for(let x=82;x<=1694;x+=4)hist+=`M${x+.5} 886V${r(at(cci,x))}`;
$('p3').innerHTML='<defs><clipPath id="hi"><rect x="81" y="774" width="1700" height="46"/></clipPath><clipPath id="lo"><rect x="81" y="953" width="1700" height="40"/></clipPath></defs><g shape-rendering="crispEdges">'+days(794,987)+`<path d="${hist}" stroke="#404040"/>`+H(820.5,'#808080')+H(952.5,'#808080')+H(894.5,'#008080')+line(o3,'#c86400','stroke-dasharray="4 3"')+line(t3,'#008080')+line(b3,'#0000ff')+line(r3,'#ff0000','stroke-dasharray="4 4"')+line(cci,'#b0b0b0')+line(cci,'#ff0000','clip-path="url(#hi)"')+line(cci,'#00ffff','clip-path="url(#lo)"')+'</g>'+
[[94,801,1],[366,799,1],[878,800,1],[1646,800,1],[690,983],[1314,983],[1414,980]].map(([x,y,c])=>`<rect x="${x-4}" y="${y-4}" width="8" height="8" rx="2" fill="${c?'#0ff':'#f00'}"/>`).join('');

/* value axes */
const L=(y,t)=>`<path d="M73 ${y+.5}h7" stroke="#fff" shape-rendering="crispEdges"/>`+(t?`<text x="70" y="${y+8}" text-anchor="end">${t}</text>`:'');
const R=(y,t)=>`<path d="M1841 ${y+.5}h6" stroke="#fff" shape-rendering="crispEdges"/>`+(t?`<text x="1848" y="${y+8}">${t}</text>`:'');
const tag=(y,c,t,h=23)=>`<rect x="1841" y="${y}" width="77" height="${h}" fill="${c}"/><text class="ink" x="1849" y="${y+19}">${t}</text>`;
const vl=(x,a,b)=>`<path d="M${x} ${a}V${b}" stroke="#fff" shape-rendering="crispEdges"/>`;
const sepL=y=>`<path d="M2 ${y}H81" stroke="#fff"/>`,sepR=y=>`<path d="M1840 ${y}H1918" stroke="#fff"/>`;
const pr=[[120,24200],[168,24000],[217,23800],[265,23600],[313,23400],[362,23200],[410,23000],[459,22800],[507,22600]];
const os=[[601,'6.00'],[623],[644,'2.00'],[666],[687,'-2.00'],[709],[730,'-6.00']];
const cc=[[803],[831,'100.00'],[858],[886,'0.00'],[914],[941,'-100'],[969]];
$('l1').innerHTML=pr.map(a=>L(...a)).join('')+vl(80.5,90,556)+sepL(555.5);
$('l2').innerHTML=L(580)+os.map(a=>L(...a)).join('')+L(752)+vl(80.5,556,774);
$('l3').innerHTML=cc.map(([y,t])=>L(y,t==='-100'?'-100....':t)).join('')+vl(80.5,774,990)+sepL(774.5);
$('r1').innerHTML=pr.map(a=>R(...a)).join('')+vl(1840.5,90,556)+sepR(555.5)+tag(390,'#f00',23048)+tag(418,'#6464ff',22930);
$('r2').innerHTML=R(687,'-2.00')+vl(1840.5,556,774)+tag(571,'#f00','8.00')+R(601,'6.00')+tag(614,'#686800','4.00')+R(644,'2.00')+tag(657,'#00f','0.00')+tag(669,'#0ff','-1.12')+tag(700,'#686800','-4.00')+R(730,'-6.00')+tag(743,'#f00','-8.00');
$('r3').innerHTML=cc.filter(a=>a[0]!==831).map(([y,t])=>R(y,t==='-100'?'-100.00':t)).join('')+vl(1840.5,774,990)+sepR(774.5)+tag(811,'#808080','120.00')+tag(817,'#a0a0a0','109.30')+tag(943,'#808080','-120.00');
let tx='<path d="M2 990.5H1918" stroke="#fff"/>';
for(let i=0;i<26;i++)tx+=vl(114.5+68*i,990,995);
for(let i=0;i<11;i++)tx+=vl(254.5+144*i,990,1001);
tx+=[[121,'9:30'],[184,'13:45'],[261,'4/28'],[320,'13:15'],[405,'4/29'],[456,'12:45'],[549,'5/02'],[693,'5/03'],[837,'5/04'],[981,'5/05'],[1125,'5/06'],[1204,'14:30'],[1269,'5/09'],[1340,'14:00'],[1413,'5/10'],[1476,'13:30'],[1557,'5/11'],[1612,'13:00'],[1701,'5/12']].map(([x,t])=>`<text x="${x}" y="1014">${t}</text>`).join('');
$('tx').innerHTML=tx;
</script>
</body>
</html>
